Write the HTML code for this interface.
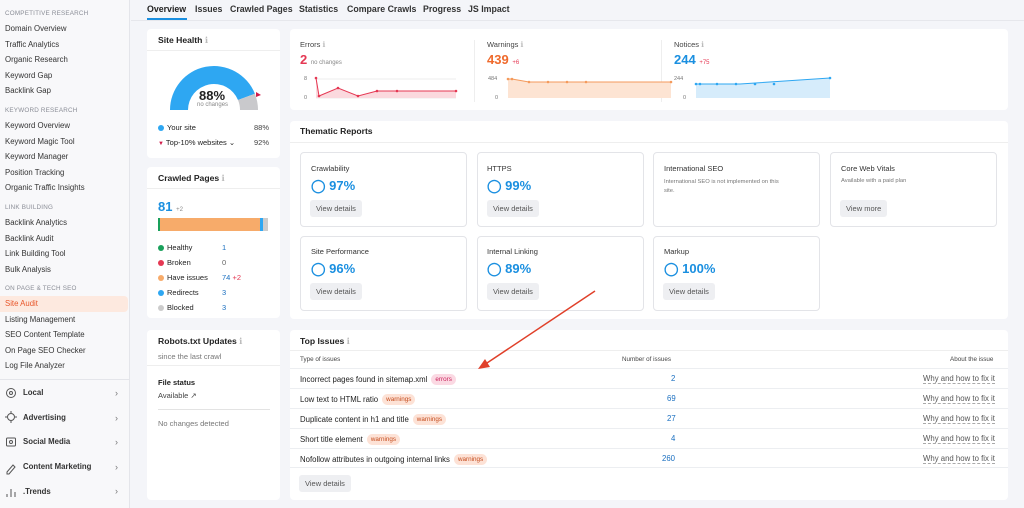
<!DOCTYPE html>
<html><head><meta charset="utf-8"><style>
*{margin:0;padding:0;box-sizing:border-box}
body{width:1024px;height:508px;overflow:hidden;background:#f4f5f9;font-family:"Liberation Sans",sans-serif;color:#222;position:relative;font-size:8px}
.a{position:absolute;white-space:nowrap}
.sb{position:absolute;left:0;top:0;width:130px;height:508px;background:#f8f8fa;border-right:1px solid #e4e5ea}
.sl{color:#8a8d96;font-size:6.3px;letter-spacing:.2px}
.si{color:#333;font-size:7.8px}
.card{position:absolute;background:#fff;border-radius:4px}
.t{font-weight:bold;font-size:8.6px;color:#222}
.btn{position:absolute;background:#eeeff2;border-radius:3px;font-size:7.5px;color:#555;padding:4px 6px}
.tc{position:absolute;background:#fff;border:1px solid #e3e4e8;border-radius:4px}
.pct{color:#1a8fe0;font-weight:bold;font-size:13px}
.tag{display:inline-block;font-size:6.3px;padding:2px 4px;border-radius:6px;margin-left:4px;vertical-align:1px}
.w{background:#fde2d6;color:#c44a1b}
.e{background:#fbd9e3;color:#c8205a}
.row{position:absolute;left:0;width:718px;height:20px;border-top:1px solid #eceef1;font-size:7.8px}
.dot{display:inline-block;width:6px;height:6px;border-radius:50%;margin-right:3px;vertical-align:-1px}
</style></head><body>
<div class="sb"></div>
<div class="a sl" style="left:5px;top:10px">COMPETITIVE RESEARCH</div>
<div class="a si" style="left:5px;top:24px">Domain Overview</div>
<div class="a si" style="left:5px;top:40px">Traffic Analytics</div>
<div class="a si" style="left:5px;top:55px">Organic Research</div>
<div class="a si" style="left:5px;top:71px">Keyword Gap</div>
<div class="a si" style="left:5px;top:86px">Backlink Gap</div>
<div class="a sl" style="left:5px;top:107px">KEYWORD RESEARCH</div>
<div class="a si" style="left:5px;top:121px">Keyword Overview</div>
<div class="a si" style="left:5px;top:137px">Keyword Magic Tool</div>
<div class="a si" style="left:5px;top:152px">Keyword Manager</div>
<div class="a si" style="left:5px;top:168px">Position Tracking</div>
<div class="a si" style="left:5px;top:183px">Organic Traffic Insights</div>
<div class="a sl" style="left:5px;top:204px">LINK BUILDING</div>
<div class="a si" style="left:5px;top:218px">Backlink Analytics</div>
<div class="a si" style="left:5px;top:234px">Backlink Audit</div>
<div class="a si" style="left:5px;top:249px">Link Building Tool</div>
<div class="a si" style="left:5px;top:265px">Bulk Analysis</div>
<div class="a sl" style="left:5px;top:285px">ON PAGE &amp; TECH SEO</div>
<div class="a" style="left:0;top:296px;width:128px;height:16px;background:#fde9df;border-radius:0 4px 4px 0"></div>
<div class="a si" style="left:5px;top:299px;color:#e8572b">Site Audit</div>
<div class="a si" style="left:5px;top:315px">Listing Management</div>
<div class="a si" style="left:5px;top:330px">SEO Content Template</div>
<div class="a si" style="left:5px;top:346px">On Page SEO Checker</div>
<div class="a si" style="left:5px;top:361px">Log File Analyzer</div>
<div class="a" style="left:0;top:379px;width:130px;border-top:1px solid #e4e5ea"></div>
<svg class="a" style="left:5px;top:387px" width="12" height="115" fill="none" stroke="#555" stroke-width="1">
<circle cx="6" cy="6" r="4.5"/><circle cx="6" cy="6" r="1.5"/>
<circle cx="6" cy="30" r="3.5"/><path d="M6 24v2M6 34v2M0 30h2M10 30h2"/>
<rect x="1.5" y="51" width="9" height="8" rx="1"/><circle cx="6" cy="55" r="1.5"/>
<path d="M2 85l6-7 2 2-6 7H2z"/>
<path d="M2 110v-3M6 110v-8M10 110v-5"/></svg>
<div class="a si" style="left:23px;top:388px;font-weight:bold">Local</div>
<div class="a si" style="left:23px;top:413px;font-weight:bold">Advertising</div>
<div class="a si" style="left:23px;top:437px;font-weight:bold">Social Media</div>
<div class="a si" style="left:23px;top:462px;font-weight:bold">Content Marketing</div>
<div class="a si" style="left:23px;top:487px;font-weight:bold">.Trends</div>
<div class="a" style="left:115px;top:381px;color:#777;font-size:9px;line-height:24.6px">›<br>›<br>›<br>›<br>›</div>

<!-- tabs -->
<div class="a" style="left:147px;top:4px;font-size:8.8px;font-weight:bold;color:#222">Overview</div>
<div class="a" style="left:195px;top:4px;font-size:8.8px;font-weight:bold;color:#333">Issues</div>
<div class="a" style="left:230px;top:4px;font-size:8.8px;font-weight:bold;color:#333">Crawled Pages</div>
<div class="a" style="left:299px;top:4px;font-size:8.8px;font-weight:bold;color:#333">Statistics</div>
<div class="a" style="left:347px;top:4px;font-size:8.8px;font-weight:bold;color:#333">Compare Crawls</div>
<div class="a" style="left:423px;top:4px;font-size:8.8px;font-weight:bold;color:#333">Progress</div>
<div class="a" style="left:468px;top:4px;font-size:8.8px;font-weight:bold;color:#333">JS Impact</div>
<div class="a" style="left:147px;top:18px;width:40px;height:2px;background:#1a8fe0"></div>
<div class="a" style="left:131px;top:20px;width:893px;border-top:1px solid #e6e7ec"></div>

<!-- site health -->
<div class="card" style="left:147px;top:29px;width:133px;height:129px"></div>
<div class="a t" style="left:158px;top:35px">Site Health <span style="color:#bbb;font-weight:normal">ℹ</span></div>
<div class="a" style="left:147px;top:50px;width:133px;border-top:1px solid #eee"></div>
<svg class="a" style="left:160px;top:60px" width="110" height="55">
<path d="M10 50A44 44 0 0 1 94.9 33.8L78 40A26 26 0 0 0 28 50Z" fill="#2ea7f2"/>
<path d="M94.9 33.8A44 44 0 0 1 98 50L80 50A26 26 0 0 0 78 40Z" fill="#c9c9cc"/>
<path d="M96 32l5 3-5 2z" fill="#d11c4a"/>
</svg>
<div class="a" style="left:199px;top:88px;font-size:13px;font-weight:bold">88%</div>
<div class="a" style="left:197px;top:102px;font-size:6px;color:#888">no changes</div>
<div class="a" style="left:158px;top:123px;font-size:7.5px"><span class="dot" style="background:#2ea7f2"></span>Your site</div>
<div class="a" style="left:254px;top:123px;font-size:7.5px;color:#444">88%</div>
<div class="a" style="left:158px;top:138px;font-size:7.5px"><span style="color:#d11c4a;font-size:6px">▼</span> Top-10% websites ⌄</div>
<div class="a" style="left:254px;top:138px;font-size:7.5px;color:#444">92%</div>

<!-- crawled pages -->
<div class="card" style="left:147px;top:167px;width:133px;height:151px"></div>
<div class="a t" style="left:158px;top:173px">Crawled Pages <span style="color:#bbb;font-weight:normal">ℹ</span></div>
<div class="a" style="left:147px;top:188px;width:133px;border-top:1px solid #eee"></div>
<div class="a" style="left:158px;top:199px;font-size:13px;font-weight:bold;color:#1a8fe0">81 <span style="font-size:6px;color:#888;font-weight:normal">+2</span></div>
<div class="a" style="left:158px;top:218px;width:110px;height:13px;background:#f7ab6a;border-left:2px solid #19a05b;border-right:6px solid #ccc"></div>
<div class="a" style="left:260px;top:218px;width:3px;height:13px;background:#2ea7f2"></div>
<div class="a" style="left:158px;top:240px;font-size:7.5px;line-height:15.1px">
<span class="dot" style="background:#19a05b"></span>Healthy<br><span class="dot" style="background:#e53853"></span>Broken<br><span class="dot" style="background:#f7ab6a"></span>Have issues<br><span class="dot" style="background:#2ea7f2"></span>Redirects<br><span class="dot" style="background:#ccc"></span>Blocked</div>
<div class="a" style="left:222px;top:240px;font-size:7.5px;line-height:15.1px;color:#1a6fc0">1<br><span style="color:#666">0</span><br>74 <span style="color:#e53853">+2</span><br>3<br>3</div>

<!-- robots -->
<div class="card" style="left:147px;top:330px;width:133px;height:170px"></div>
<div class="a t" style="left:158px;top:336px">Robots.txt Updates <span style="color:#bbb;font-weight:normal">ℹ</span></div>
<div class="a" style="left:158px;top:352px;font-size:7.5px;color:#777">since the last crawl</div>
<div class="a" style="left:147px;top:365px;width:133px;border-top:1px solid #eee"></div>
<div class="a" style="left:158px;top:378px;font-size:7.5px;font-weight:bold">File status</div>
<div class="a" style="left:158px;top:391px;font-size:7.5px;color:#444">Available ↗</div>
<div class="a" style="left:158px;top:409px;width:112px;border-top:1px solid #e3e3e3"></div>
<div class="a" style="left:158px;top:419px;font-size:7.5px;color:#777">No changes detected</div>

<!-- errors/warnings/notices -->
<div class="card" style="left:290px;top:29px;width:718px;height:81px"></div>
<div class="a" style="left:474px;top:40px;height:62px;border-left:1px solid #eee"></div>
<div class="a" style="left:661px;top:40px;height:62px;border-left:1px solid #eee"></div>
<div class="a" style="left:300px;top:40px;font-size:7.5px;color:#444">Errors <span style="color:#bbb">ℹ</span></div>
<div class="a" style="left:300px;top:52px;font-size:13px;font-weight:bold;color:#e53853">2 <span style="font-size:6px;color:#888;font-weight:normal">no changes</span></div>
<div class="a" style="left:487px;top:40px;font-size:7.5px;color:#444">Warnings <span style="color:#bbb">ℹ</span></div>
<div class="a" style="left:487px;top:52px;font-size:13px;font-weight:bold;color:#ef6a2c">439 <span style="font-size:6px;color:#e53853;font-weight:normal">+6</span></div>
<div class="a" style="left:674px;top:40px;font-size:7.5px;color:#444">Notices <span style="color:#bbb">ℹ</span></div>
<div class="a" style="left:674px;top:52px;font-size:13px;font-weight:bold;color:#1a8fe0">244 <span style="font-size:6px;color:#e53853;font-weight:normal">+75</span></div>
<svg class="a" style="left:290px;top:70px" width="718" height="35" font-family="Liberation Sans" font-size="5.5" fill="#777">
<text x="14" y="10">8</text><text x="14" y="29">0</text>
<path d="M26 9H166" stroke="#eee"/><path d="M26 28H166" stroke="#eee"/>
<path d="M26 8L29 26L48 18L68 26L87 21L107 21L166 21V28H26Z" fill="#fbd9de"/>
<path d="M26 8L29 26L48 18L68 26L87 21L107 21L166 21" stroke="#e53853" fill="none"/>
<g fill="#e53853"><circle cx="26" cy="8" r="1.3"/><circle cx="29" cy="26" r="1.3"/><circle cx="48" cy="18" r="1.3"/><circle cx="68" cy="26" r="1.3"/><circle cx="87" cy="21" r="1.3"/><circle cx="107" cy="21" r="1.3"/><circle cx="166" cy="21" r="1.3"/></g>
<text x="198" y="10">484</text><text x="205" y="29">0</text>
<path d="M218 9L222 9L239 12L381 12V28H218Z" fill="#fde4d3"/>
<path d="M218 9L222 9L239 12L381 12" stroke="#f49a5c" fill="none"/>
<g fill="#f49a5c"><circle cx="218" cy="9" r="1.3"/><circle cx="222" cy="9" r="1.3"/><circle cx="239" cy="12" r="1.3"/><circle cx="258" cy="12" r="1.3"/><circle cx="277" cy="12" r="1.3"/><circle cx="296" cy="12" r="1.3"/><circle cx="381" cy="12" r="1.3"/></g>
<text x="384" y="10">244</text><text x="393" y="29">0</text>
<path d="M406 14L410 14L450 14L540 8V28H406Z" fill="#d6ecfb"/>
<path d="M406 14L410 14L450 14L540 8" stroke="#2ea7f2" fill="none"/>
<g fill="#2ea7f2"><circle cx="406" cy="14" r="1.3"/><circle cx="410" cy="14" r="1.3"/><circle cx="427" cy="14" r="1.3"/><circle cx="446" cy="14" r="1.3"/><circle cx="465" cy="14" r="1.3"/><circle cx="484" cy="14" r="1.3"/><circle cx="540" cy="8" r="1.3"/></g>
</svg>

<!-- thematic -->
<div class="card" style="left:290px;top:121px;width:718px;height:198px"></div>
<div class="a t" style="left:300px;top:126px">Thematic Reports</div>
<div class="a" style="left:290px;top:142px;width:718px;border-top:1px solid #eee"></div>
<div class="tc" style="left:300px;top:152px;width:167px;height:75px"></div>
<div class="tc" style="left:477px;top:152px;width:167px;height:75px"></div>
<div class="tc" style="left:653px;top:152px;width:167px;height:75px"></div>
<div class="tc" style="left:830px;top:152px;width:167px;height:75px"></div>
<div class="tc" style="left:300px;top:236px;width:167px;height:75px"></div>
<div class="tc" style="left:477px;top:236px;width:167px;height:75px"></div>
<div class="tc" style="left:653px;top:236px;width:167px;height:75px"></div>
<div class="a" style="left:311px;top:164px;font-size:7.5px;color:#333">Crawlability</div>
<div class="a pct" style="left:311px;top:178px">◯ 97%</div>
<div class="btn" style="left:310px;top:200px">View details</div>
<div class="a" style="left:487px;top:164px;font-size:7.5px;color:#333">HTTPS</div>
<div class="a pct" style="left:487px;top:178px">◯ 99%</div>
<div class="btn" style="left:487px;top:200px">View details</div>
<div class="a" style="left:664px;top:164px;font-size:7.5px;color:#333">International SEO</div>
<div class="a" style="left:664px;top:178px;font-size:5.8px;color:#777;line-height:9px;white-space:normal;width:120px">International SEO is not implemented on this site.</div>
<div class="a" style="left:841px;top:164px;font-size:7.5px;color:#333">Core Web Vitals</div>
<div class="a" style="left:841px;top:178px;font-size:5.8px;color:#777">Available with a paid plan</div>
<div class="btn" style="left:840px;top:200px">View more</div>
<div class="a" style="left:311px;top:247px;font-size:7.5px;color:#333">Site Performance</div>
<div class="a pct" style="left:311px;top:261px">◯ 96%</div>
<div class="btn" style="left:310px;top:283px">View details</div>
<div class="a" style="left:487px;top:247px;font-size:7.5px;color:#333">Internal Linking</div>
<div class="a pct" style="left:487px;top:261px">◯ 89%</div>
<div class="btn" style="left:487px;top:283px">View details</div>
<div class="a" style="left:664px;top:247px;font-size:7.5px;color:#333">Markup</div>
<div class="a pct" style="left:664px;top:261px">◯ 100%</div>
<div class="btn" style="left:663px;top:283px">View details</div>

<!-- top issues -->
<div class="card" style="left:290px;top:330px;width:718px;height:170px"></div>
<div class="a t" style="left:300px;top:336px">Top Issues <span style="color:#bbb;font-weight:normal">ℹ</span></div>
<div class="a" style="left:290px;top:350px;width:718px;border-top:1px solid #eee"></div>
<div class="a" style="left:300px;top:356px;font-size:6.3px;color:#444">Type of issues</div>
<div class="a" style="left:622px;top:356px;font-size:6.3px;color:#444">Number of issues</div>
<div class="a" style="left:950px;top:356px;font-size:6.3px;color:#444">About the issue</div>
<div style="position:absolute;left:290px;top:368px">
<div class="row" style="top:0"><span class="a" style="left:10px;top:5px">Incorrect pages found in sitemap.xml<span class="tag e">errors</span></span><span class="a" style="left:381px;top:5px;color:#1a6fc0">2</span><span class="a" style="left:633px;top:5px;color:#555;border-bottom:1px dashed #aaa">Why and how to fix it</span></div>
<div class="row" style="top:20px"><span class="a" style="left:10px;top:5px">Low text to HTML ratio<span class="tag w">warnings</span></span><span class="a" style="left:377px;top:5px;color:#1a6fc0">69</span><span class="a" style="left:633px;top:5px;color:#555;border-bottom:1px dashed #aaa">Why and how to fix it</span></div>
<div class="row" style="top:40px"><span class="a" style="left:10px;top:5px">Duplicate content in h1 and title<span class="tag w">warnings</span></span><span class="a" style="left:377px;top:5px;color:#1a6fc0">27</span><span class="a" style="left:633px;top:5px;color:#555;border-bottom:1px dashed #aaa">Why and how to fix it</span></div>
<div class="row" style="top:60px"><span class="a" style="left:10px;top:5px">Short title element<span class="tag w">warnings</span></span><span class="a" style="left:381px;top:5px;color:#1a6fc0">4</span><span class="a" style="left:633px;top:5px;color:#555;border-bottom:1px dashed #aaa">Why and how to fix it</span></div>
<div class="row" style="top:80px;border-bottom:1px solid #eceef1"><span class="a" style="left:10px;top:5px">Nofollow attributes in outgoing internal links<span class="tag w">warnings</span></span><span class="a" style="left:372px;top:5px;color:#1a6fc0">260</span><span class="a" style="left:633px;top:5px;color:#555;border-bottom:1px dashed #aaa">Why and how to fix it</span></div>
</div>
<div class="btn" style="left:299px;top:475px">View details</div>

<svg class="a" style="left:0;top:0" width="1024" height="508"><path d="M595 291L484 365" stroke="#e0402a" stroke-width="1.5"/><path d="M478 369L485 359L490 367Z" fill="#e0402a"/></svg>
</body></html>
